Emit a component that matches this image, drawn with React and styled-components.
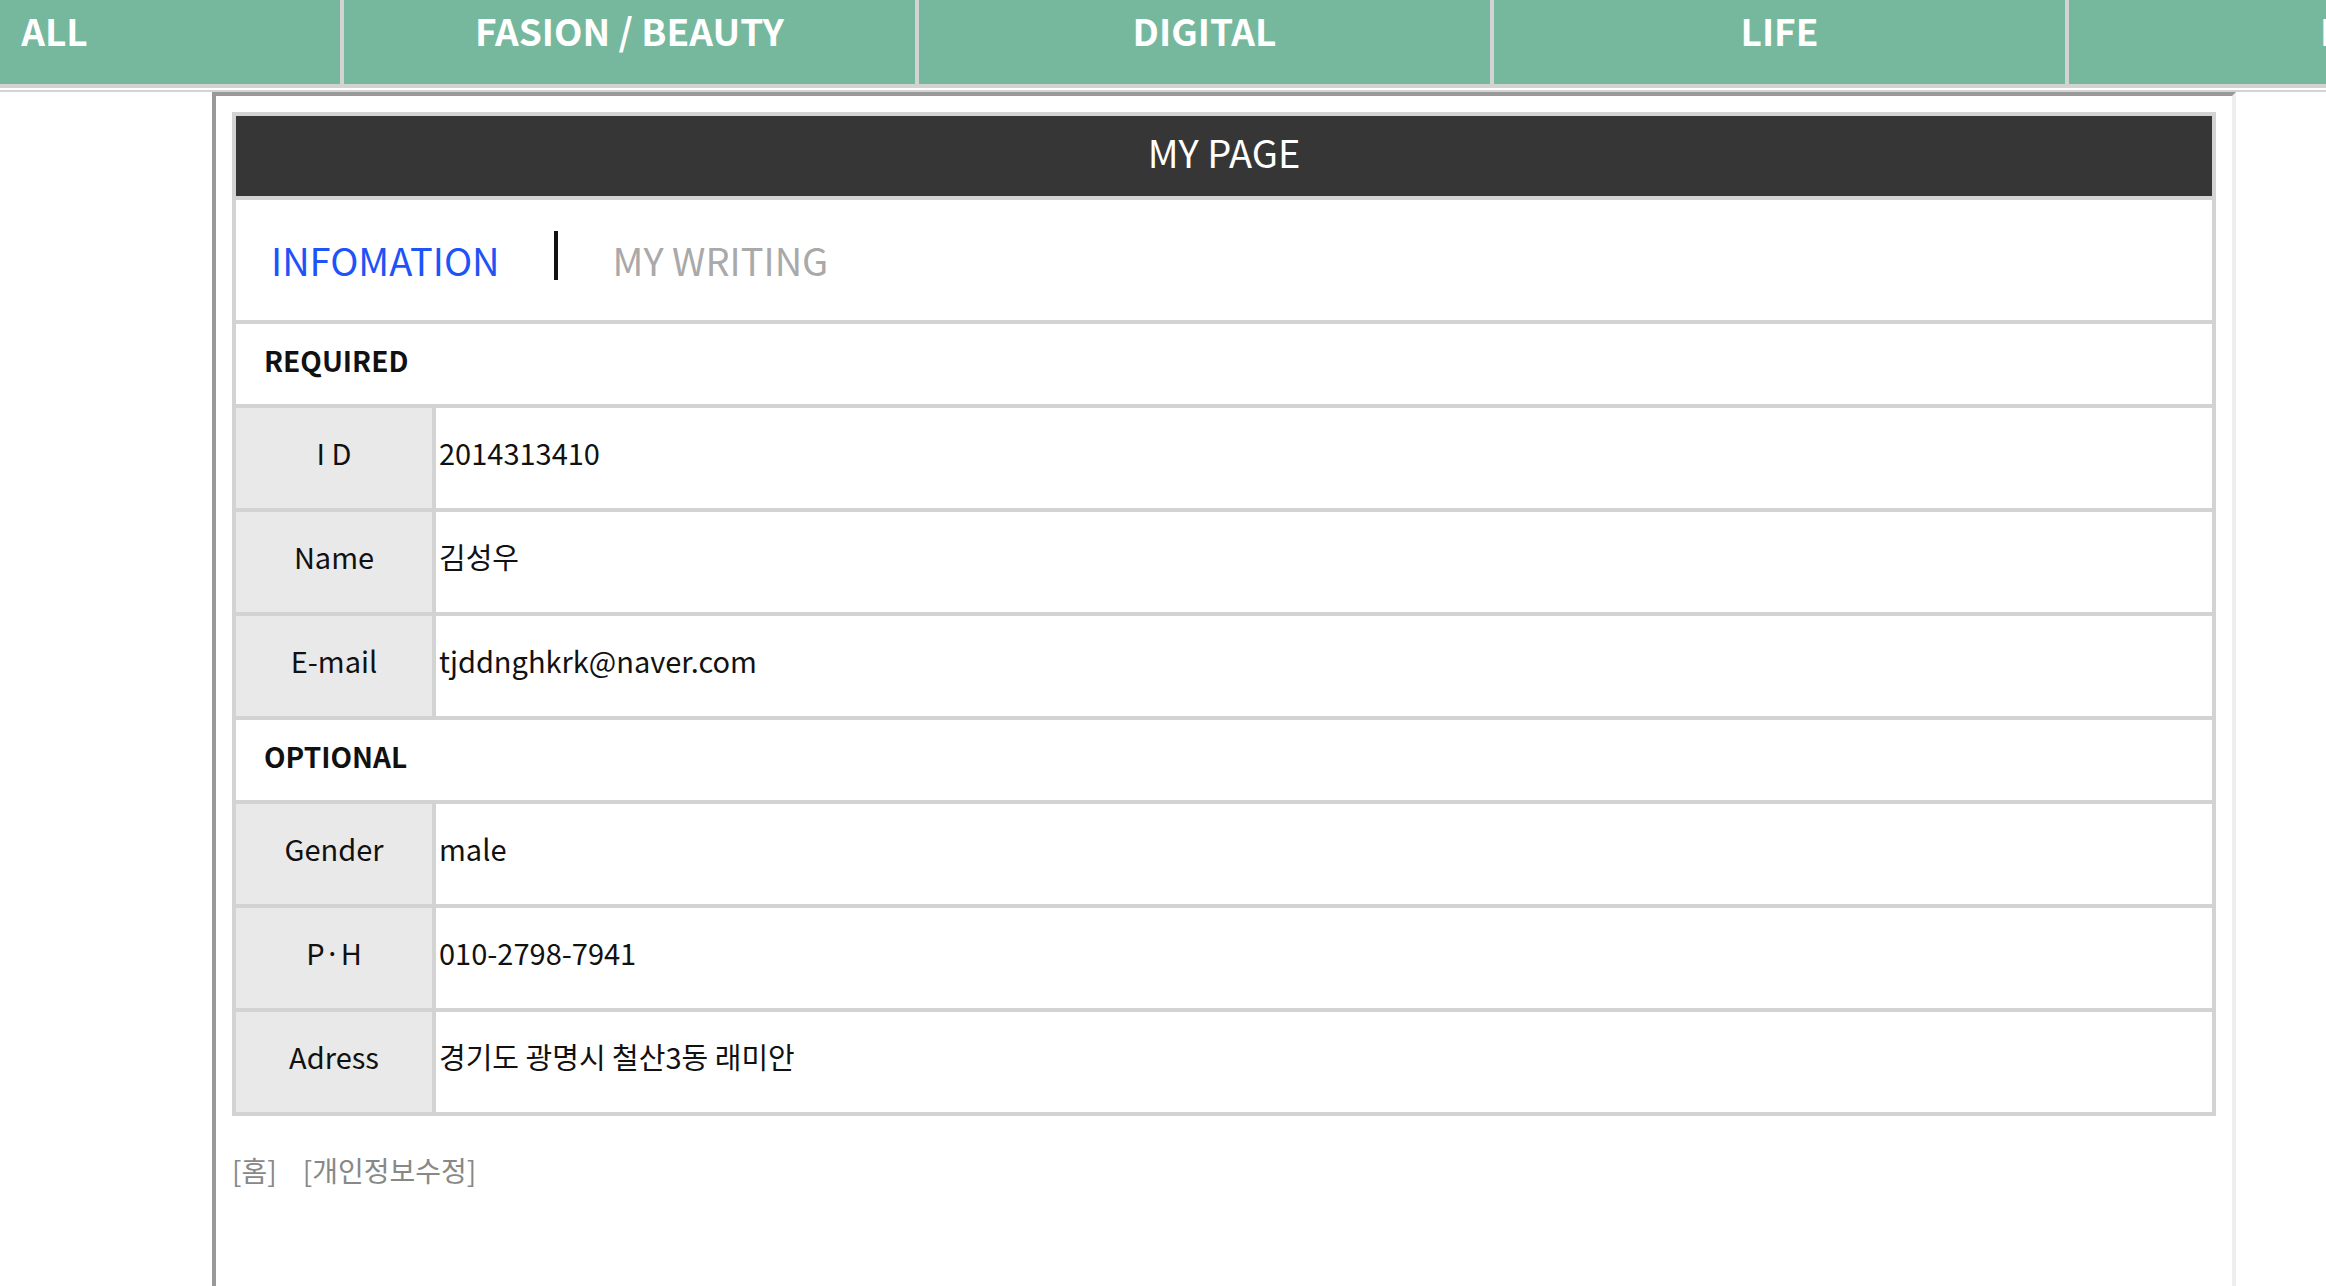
import React from 'react';
import styled, { createGlobalStyle } from 'styled-components';

const GlobalStyle = createGlobalStyle`
  html, body {
    margin: 0;
    padding: 0;
    background: #fff;
    overflow: hidden;
  }
  body {
    font-family: "Noto Sans CJK KR", "Noto Sans", sans-serif;
    color: #111;
  }
  * { box-sizing: border-box; }
`;

const Nav = styled.nav`
  height: 88px;
  background: #75b89d;
  border-bottom: 4px solid #d3d3d3;
  overflow: hidden;
`;

const NavList = styled.ul`
  display: flex;
  margin: 0 0 0 -231px;
  padding: 0;
  list-style: none;
`;

const NavItem = styled.li`
  flex: 0 0 575px;
  height: 84px;
  border-right: 4px solid #d3d3d3;
  text-align: center;
  color: #fff;
  font-size: 37px;
  font-weight: 700;
  line-height: 61px;
  white-space: nowrap;
`;

const Rule = styled.div`
  height: 2px;
  margin-top: 2px;
  background: #d3d3d3;
`;

const Frame = styled.main`
  margin-left: 212px;
  width: 2024px;
  min-height: 1300px;
  border: 4px solid;
  border-color: #999 #eee #eee #999;
  padding: 16px;
`;

const Panel = styled.section`
  border: 4px solid #d3d3d3;
  display: flex;
  flex-direction: column;
`;

const Header = styled.header`
  height: 80px;
  padding-bottom: 10px;
  background: #363636;
  color: #fff;
  font-size: 38px;
  display: flex;
  align-items: center;
  justify-content: center;
`;

const Tabs = styled.div`
  height: 124px;
  border-top: 4px solid #d3d3d3;
  display: flex;
  align-items: center;
  padding-left: 35px;
`;

const Tab = styled.span`
  font-size: 38px;
  line-height: 1;
  color: ${({ $active }) => ($active ? '#1d53f7' : '#a9a9a9')};
`;

const TabBar = styled.span`
  width: 4px;
  height: 49px;
  background: #111;
  margin: 0 55px 9px 54px;
`;

const SectionTitle = styled.div`
  height: 84px;
  border-top: 4px solid #d3d3d3;
  padding: 0 0 8px 28px;
  display: flex;
  align-items: center;
  font-size: 28px;
  font-weight: 700;
  color: #111;
`;

const FieldRow = styled.div`
  display: grid;
  grid-template-columns: 200px 1fr;
  height: 104px;
  border-top: 4px solid #d3d3d3;
  font-size: 29px;
`;

const Label = styled.div`
  background: #e9e9e9;
  border-right: 4px solid #d3d3d3;
  padding-bottom: 12px;
  display: flex;
  align-items: center;
  justify-content: center;
  color: #111;
`;

const Value = styled.div`
  display: flex;
  align-items: center;
  padding: 0 0 12px 3px;
  color: #111;
`;

const Footer = styled.div`
  display: flex;
  gap: 26px;
  margin-top: 35px;
  font-size: 28px;
  line-height: 38px;
  color: #888;
`;

const FooterLink = styled.a`
  color: inherit;
  text-decoration: none;
  cursor: pointer;
`;

const menu = ['ALL', 'FASION / BEAUTY', 'DIGITAL', 'LIFE', 'ETC'];

const required = [
  { label: 'I D', value: '2014313410' },
  { label: 'Name', value: '김성우' },
  { label: 'E-mail', value: 'tjddnghkrk@naver.com' },
];

const optional = [
  { label: 'Gender', value: 'male' },
  { label: 'P·H', value: '010-2798-7941' },
  { label: 'Adress', value: '경기도 광명시 철산3동 래미안' },
];

const Field = ({ f }) => (
  <FieldRow>
    <Label>{f.label}</Label>
    <Value>{f.value}</Value>
  </FieldRow>
);

export default function App() {
  return (
    <>
      <GlobalStyle />
      <Nav>
        <NavList>
          {menu.map((m) => <NavItem key={m}>{m}</NavItem>)}
        </NavList>
      </Nav>
      <Rule />
      <Frame>
        <Panel>
          <Header>MY PAGE</Header>
          <Tabs>
            <Tab $active>INFOMATION</Tab>
            <TabBar />
            <Tab>MY WRITING</Tab>
          </Tabs>
          <SectionTitle>REQUIRED</SectionTitle>
          {required.map((f) => <Field key={f.label} f={f} />)}
          <SectionTitle>OPTIONAL</SectionTitle>
          {optional.map((f) => <Field key={f.label} f={f} />)}
        </Panel>
        <Footer>
          <FooterLink>[홈]</FooterLink>
          <FooterLink>[개인정보수정]</FooterLink>
        </Footer>
      </Frame>
    </>
  );
}
